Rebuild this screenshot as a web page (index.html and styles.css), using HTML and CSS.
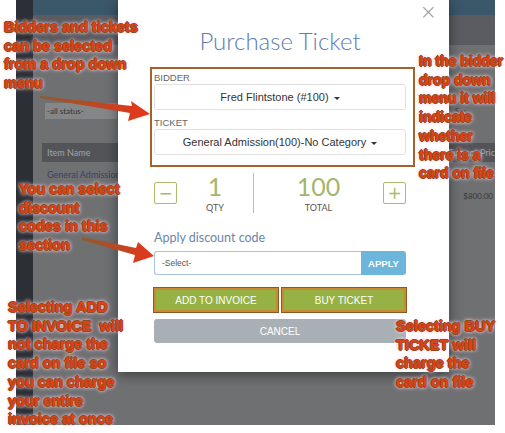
FILE: index.html
```html
<!DOCTYPE html>
<html lang="en">
<head>
    <meta charset="UTF-8">
    <meta name="viewport" content="width=device-width, initial-scale=1.0">
    <title>Purchase Ticket</title>
    <link rel="stylesheet" href="styles.css">
</head>
<body>
    <div class="shot">
        <!-- dimmed page behind the modal -->
        <div class="app">
            <aside class="sidebar"></aside>
            <main class="page">
                <div class="topbar"></div>
                <div class="page-head"></div>
                <div class="filters">
                    <span class="status-select">-all status-</span>
                    <span class="sales-label">Ses</span>
                </div>
                <div class="table-head">
                    <span>Item Name</span>
                    <span>Current Pric</span>
                </div>
                <div class="table-row">
                    <span class="item-name">General Admission</span>
                    <span class="item-price">$800.00</span>
                </div>
            </main>
        </div>

        <div class="modal">
            <span class="close">&times;</span>
            <h1 class="modal-title">Purchase Ticket</h1>

            <label class="field-label">BIDDER</label>
            <div class="select-box">Fred Flintstone (#100) <span class="caret"></span></div>
            <label class="field-label">TICKET</label>
            <div class="select-box">General Admission(100)-No Category <span class="caret"></span></div>

            <div class="qty-row">
                <button class="step-btn">&minus;</button>
                <div class="qty-col">
                    <span class="big-num">1</span>
                    <span class="small-cap">QTY</span>
                </div>
                <div class="divider"></div>
                <div class="total-col">
                    <span class="big-num">100</span>
                    <span class="small-cap">TOTAL</span>
                </div>
                <button class="step-btn">+</button>
            </div>

            <div class="discount-label">Apply discount code</div>
            <div class="discount-row">
                <div class="discount-input">-Select-</div>
                <button class="apply-btn">APPLY</button>
            </div>

            <div class="action-row">
                <button class="action-btn">ADD TO INVOICE</button>
                <button class="action-btn">BUY TICKET</button>
            </div>
            <button class="cancel-btn">CANCEL</button>

            <div class="mark-box"></div>
        </div>

        <svg class="arrows" width="505" height="433" viewBox="0 0 505 433">
            <defs>
                <linearGradient id="shaft1" x1="0" y1="0" x2="1" y2="0">
                    <stop offset="0" stop-color="#8f5a2c"/>
                    <stop offset="1" stop-color="#e8361a"/>
                </linearGradient>
            </defs>
            <polygon points="40,96 132,106 131,101 150,114 128,121 130,113 40,98" fill="url(#shaft1)"/>
            <polygon points="82,237 136,248 138,242 154,256 133,263 135,255 82,240" fill="url(#shaft1)"/>
        </svg>

        <p class="note note-bidders">Bidders and tickets<br>can be selected<br>from a drop down<br>menu</p>
        <p class="note note-card">In the bidder<br>drop down<br>menu it will<br>indicate<br>whether<br>there is a<br>card on file</p>
        <p class="note note-discount">You can select<br>discount<br>codes in this<br>section</p>
        <p class="note note-invoice">Selecting ADD<br>TO INVOICE&nbsp; will<br>not charge the<br>card on file so<br>you can charge<br>your entire<br>invoice at once</p>
        <p class="note note-buy">Selecting BUY<br>TICKET will<br>charge the<br>card on file</p>
    </div>
</body>
</html>
```

FILE: styles.css
```css
body {
    margin: 0;
    background-color: #fff;
    font-family: Lato, "Open Sans", sans-serif;
}

.shot {
    position: relative;
    width: 505px;
    height: 433px;
    overflow: hidden;
}

/* page behind the modal */
.app {
    display: flex;
    width: 479px;
    height: 425px;
    margin-left: 16px;
    background-color: #6f7072;
}

.sidebar {
    width: 17px;
    background-color: #2c2f36;
}

.page {
    flex: 1;
    display: flex;
    flex-direction: column;
}

.topbar {
    height: 15px;
    background-color: #3b576a;
}

.page-head {
    height: 30px;
    background-color: #5a5c61;
}

.filters {
    display: flex;
    justify-content: space-between;
    align-items: center;
    padding: 57px 0 0 12px;
    height: 18px;
}

.status-select {
    width: 70px;
    height: 16px;
    line-height: 16px;
    font-size: 8px;
    color: #333;
    background-color: #858688;
    padding-left: 2px;
}

.sales-label {
    font-size: 8px;
    color: #3c3c3c;
    margin-right: 28px;
}

.table-head {
    display: flex;
    justify-content: space-between;
    align-items: center;
    height: 19px;
    margin: 23px 0 0 9px;
    padding: 0 0 0 5px;
    background-color: #525458;
    font-size: 9px;
    color: #a4a5a8;
}

.table-row {
    position: relative;
    height: 40px;
    padding: 7px 0 0 14px;
    font-size: 9px;
}

.item-name {
    color: #3b4260;
}

.item-price {
    position: absolute;
    right: 2px;
    top: 29px;
    font-size: 8px;
    color: #363636;
}

/* modal */
.modal {
    position: absolute;
    left: 118px;
    top: 0;
    width: 331px;
    height: 372px;
    padding: 0 43px 0 36px;
    box-sizing: border-box;
    background-color: #fff;
    box-shadow: 0 3px 12px rgba(0, 0, 0, 0.45);
}

.close {
    position: absolute;
    top: 1px;
    right: 12px;
    font-family: "DejaVu Sans", sans-serif;
    font-size: 21px;
    line-height: 22px;
    font-weight: 200;
    color: #9b9b9b;
}

.modal-title {
    margin: 0;
    padding-top: 27px;
    font-size: 24px;
    font-weight: 300;
    line-height: 28px;
    text-align: center;
    color: #5c7db0;
}

.field-label {
    display: block;
    margin-top: 17px;
    font-family: "Liberation Sans", Arial, sans-serif;
    font-size: 9.5px;
    line-height: 11px;
    color: #666;
}

.field-label + .select-box {
    margin-top: 1px;
}

.select-box + .field-label {
    margin-top: 7px;
}

.select-box {
    height: 26px;
    line-height: 24px;
    border: 1px solid #e1e1e1;
    border-radius: 3px;
    box-sizing: border-box;
    text-align: center;
    font-family: "Liberation Sans", Arial, sans-serif;
    font-size: 11px;
    color: #333;
}

.caret {
    display: inline-block;
    width: 0;
    height: 0;
    margin-left: 2px;
    vertical-align: middle;
    border-top: 3px solid #333;
    border-left: 3px solid transparent;
    border-right: 3px solid transparent;
}

.qty-row {
    display: flex;
    align-items: center;
    height: 40px;
    margin-top: 18px;
}

.step-btn {
    width: 23px;
    height: 22px;
    padding: 0;
    border: 1.5px solid #a9bc6c;
    border-radius: 2px;
    background-color: #fff;
    color: #a9bc6c;
    font-family: "DejaVu Sans", sans-serif;
    font-size: 17px;
    line-height: 18px;
}

.qty-col,
.total-col {
    display: flex;
    flex-direction: column;
    align-items: center;
}

.qty-col {
    width: 76px;
}

.total-col {
    width: 129px;
}

.divider {
    width: 1px;
    height: 40px;
    background-color: #bcbcbc;
}

.big-num {
    font-size: 25px;
    font-weight: 400;
    line-height: 25px;
    color: #a5b66b;
}

.small-cap {
    margin-top: 4px;
    font-size: 9px;
    line-height: 10px;
    color: #555;
}

.discount-label {
    margin-top: 17px;
    font-size: 12.5px;
    line-height: 16px;
    color: #6985aa;
}

.discount-row {
    display: flex;
    height: 24px;
    margin-top: 5px;
}

.discount-input {
    flex: 1;
    border: 1px solid #a9c2df;
    border-right: none;
    border-radius: 3px 0 0 3px;
    padding-left: 7px;
    font-family: "Liberation Sans", Arial, sans-serif;
    font-size: 8.5px;
    line-height: 22px;
    color: #555;
}

.apply-btn {
    width: 45px;
    border: none;
    border-radius: 0 3px 3px 0;
    background-color: #6cb5db;
    color: #fff;
    font-family: "Liberation Sans", Arial, sans-serif;
    font-size: 9.5px;
    font-weight: bold;
}

.action-row {
    display: flex;
    gap: 4px;
    margin-top: 13px;
}

.action-btn {
    flex: 1;
    height: 24px;
    border: 2px solid #c98a33;
    outline: 1px solid #8a5c24;
    background-color: #97b244;
    color: #fff;
    font-family: "Liberation Sans", Arial, sans-serif;
    font-size: 10px;
}

.cancel-btn {
    display: block;
    width: 100%;
    height: 24px;
    margin-top: 7px;
    border: none;
    border-radius: 3px;
    background-color: #a8b0b5;
    color: #fff;
    font-family: "Liberation Sans", Arial, sans-serif;
    font-size: 10px;
}

/* annotation frame around the selects */
.mark-box {
    position: absolute;
    left: 32px;
    top: 67px;
    width: 261px;
    height: 96px;
    border: 2px solid #a6622c;
}

.arrows {
    position: absolute;
    left: 0;
    top: 0;
}

/* callout notes */
.note {
    position: absolute;
    margin: 0;
    white-space: nowrap;
    font-family: "Liberation Sans", Arial, sans-serif;
    font-size: 14.5px;
    font-weight: bold;
    line-height: 18.7px;
    color: #e0401c;
    text-shadow:
        -1px 0 #8e4a18, 1px 0 #8e4a18, 0 -1px #8e4a18, 0 1px #8e4a18,
        0 0 3px #fff, 0 0 4px #f7c8e0, 0 0 5px #f7c8e0;
}

.note-bidders {
    left: 4px;
    top: 18px;
}

.note-card {
    left: 419px;
    top: 52px;
    font-size: 14px;
}

.note-discount {
    left: 19px;
    top: 180px;
}

.note-invoice {
    left: 8px;
    top: 298px;
}

.note-buy {
    left: 396px;
    top: 317px;
}
```
